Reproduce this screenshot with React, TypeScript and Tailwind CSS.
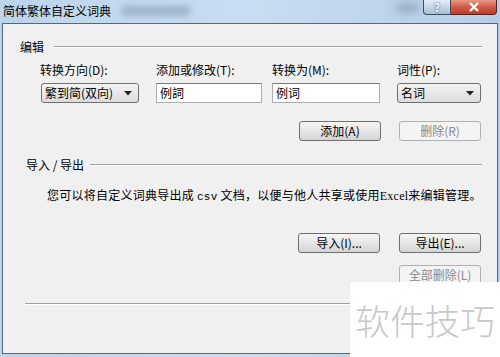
const FONT = "font-['SimSun','Noto_Sans_CJK_SC',sans-serif]";

function Btn({ label, disabled }: { label: string; disabled?: boolean }) {
  return (
    <div
      className={
        'w-[82px] h-[20px] rounded-[3px] flex items-center justify-center text-[12px] leading-none ' +
        (disabled
          ? 'border border-[#adb2b5] bg-[#f4f4f4] text-[#8a8a8a]'
          : 'border border-[#707070] bg-gradient-to-b from-[#f6f6f6] via-[#e6e6e6] to-[#d4d4d4] text-black')
      }
    >
      {label}
    </div>
  );
}

function Combo({ value, width }: { value: string; width: string }) {
  return (
    <div
      className={`${width} h-[20px] rounded-[3px] border border-[#707070] bg-gradient-to-b from-[#f4f4f4] to-[#dcdcdc] flex items-center pl-[3px] pr-[6px] text-[12px]`}
    >
      <span className="flex-1">{value}</span>
      <svg width="8" height="5" viewBox="0 0 8 5">
        <path d="M0 0 H8 L4 4.5 Z" fill="#222" />
      </svg>
    </div>
  );
}

function Field({ value, width }: { value: string; width: string }) {
  return (
    <div
      className={`${width} h-[20px] border border-[#abadb3] border-t-[#7a7a7a] bg-white flex items-center pl-[3px] text-[12px]`}
    >
      {value}
    </div>
  );
}

function GroupHead({ label, left, lineFrom }: { label: string; left: string; lineFrom?: string }) {
  return (
    <div className={`flex items-center h-[16px] ${left} pr-[15px]`}>
      <span className="text-[12px] leading-[16px] whitespace-pre">{label}</span>
      <div className={`flex-1 h-[2px] border-t border-[#a0a0a0] border-b border-b-white ${lineFrom ?? 'ml-[10px]'}`} />
    </div>
  );
}

export default function App() {
  return (
    <div className={`relative w-[500px] h-[357px] overflow-hidden bg-gradient-to-r from-[#bcd4ec] via-[#c9ddf1] to-[#b5cde6] ${FONT} text-black`}>
      {/* title bar */}
      <div className="h-[23px] flex items-start">
        <span className="pl-[3px] pt-[4px] text-[12px] leading-[14px] text-black">简体繁体自定义词典</span>
        <div className="ml-[10px] mt-[6px] w-[70px] h-[10px] rounded-full bg-[#8ea3b9] blur-[3px] opacity-70" />
        <div className="flex-1" />
        <div className="mr-[4px] mt-[3px] w-[24px] h-[10px] rounded-full bg-[#5f7185] blur-[4px] opacity-40" />
        <div className="w-[28px] h-[15px] rounded-bl-[4px] border border-[#3b4d61] border-t-0 bg-gradient-to-b from-[#e4edf7] to-[#a9bed4] flex items-center justify-center text-[11px] leading-none font-bold text-white [text-shadow:0_0_2px_#334]">
          ?
        </div>
        <div className="mr-[3px] w-[46px] h-[15px] rounded-br-[4px] border border-[#5a2020] border-t-0 border-l-0 bg-gradient-to-b from-[#e59a85] via-[#cf5a45] to-[#c0392b] flex items-center justify-center">
          <svg width="12" height="10" viewBox="0 0 12 10">
            <path d="M2 1 L10 9 M10 1 L2 9" stroke="#fff" strokeWidth="2.4" />
          </svg>
        </div>
      </div>

      {/* client area */}
      <div className="mx-[2px] h-[331px] border border-[#55687c] bg-[#f0f0f0] flex flex-col">
        <div className="mt-[15px]">
          <GroupHead label="编辑" left="pl-[17px]" />
        </div>

        <div className="mt-[7px] flex text-[12px] leading-[16px]">
          <span className="ml-[37px] w-[116px]">转换方向(D):</span>
          <span className="w-[116px]">添加或修改(T):</span>
          <span className="w-[125px]">转换为(M):</span>
          <span>词性(P):</span>
        </div>

        <div className="mt-[5px] flex">
          <div className="ml-[38px]">
            <Combo value="繁到简(双向)" width="w-[98px]" />
          </div>
          <div className="ml-[17px]">
            <Field value="例詞" width="w-[106px]" />
          </div>
          <div className="ml-[10px]">
            <Field value="例词" width="w-[108px]" />
          </div>
          <div className="ml-[17px]">
            <Combo value="名词" width="w-[84px]" />
          </div>
        </div>

        <div className="mt-[18px] flex justify-end gap-[18px] pr-[16px]">
          <Btn label="添加(A)" />
          <Btn label="删除(R)" disabled />
        </div>

        <div className="mt-[16px]">
          <GroupHead label="导入 / 导出" left="pl-[23px]" lineFrom="ml-[6px]" />
        </div>

        <p className="mt-[14px] pl-[44px] text-[12px] leading-[16px] whitespace-nowrap tracking-[0.25px]">
          您可以将自定义词典导出成 <span className="font-['Liberation_Mono',monospace] text-[11px]">csv</span> 文档，以便与他人共享或使用<span className="font-['Liberation_Serif',serif]">Excel</span>来编辑管理。
        </p>

        <div className="mt-[28px] flex justify-end gap-[19px] pr-[16px]">
          <Btn label="导入(I)..." />
          <Btn label="导出(E)..." />
        </div>

        <div className="mt-[12px] flex justify-end pr-[16px]">
          <Btn label="全部删除(L)" disabled />
        </div>

        <div className="mt-[18px] ml-[22px] mr-[15px] h-[2px] border-t border-[#a0a0a0] border-b border-b-white" />
      </div>

      {/* watermark */}
      <div className="absolute left-[350px] top-[282px] w-[150px] h-[75px] bg-white flex items-center justify-center">
        <span className="font-['Noto_Sans_CJK_SC',sans-serif] font-light text-[35px] leading-none text-[#c8c8c8] tracking-[0px]">软件技巧</span>
      </div>
    </div>
  );
}
